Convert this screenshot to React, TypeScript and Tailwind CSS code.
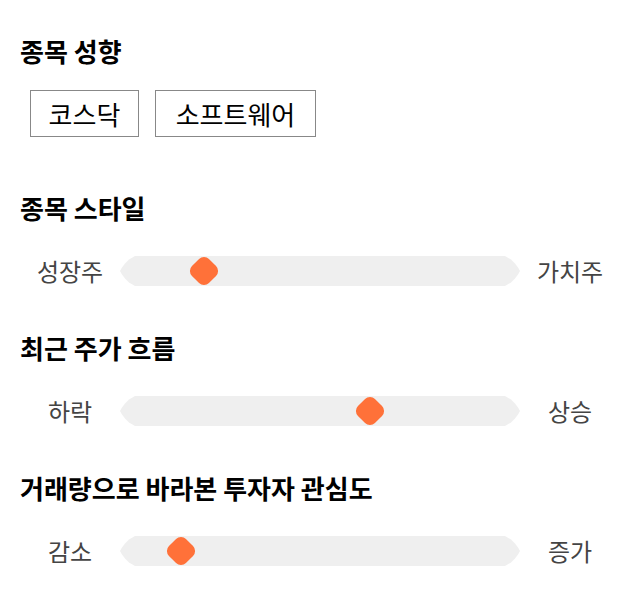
import React from "react";

const font = { fontFamily: '"Noto Sans CJK KR", "Noto Sans", sans-serif' };

const sliders = [
  { title: "종목 스타일", left: "성장주", right: "가치주", value: 21 },
  { title: "최근 주가 흐름", left: "하락", right: "상승", value: 62.5 },
  { title: "거래량으로 바라본 투자자 관심도", left: "감소", right: "증가", value: 15.3 },
];

const Slider = ({ left, right, value }: { left: string; right: string; value: number }) => (
  <div className="flex items-center mt-[33px]">
    <div className="w-[100px] text-center text-[24px] text-[#444] leading-[30px]">{left}</div>
    <div className="relative flex-1 h-[30px]">
      <div className="absolute inset-0 bg-[#efefef] [clip-path:polygon(0_50%,2px_38%,5px_25%,9px_12%,15px_0,calc(100%_-_15px)_0,calc(100%_-_9px)_12%,calc(100%_-_5px)_25%,calc(100%_-_2px)_38%,100%_50%,calc(100%_-_2px)_62%,calc(100%_-_5px)_75%,calc(100%_-_9px)_88%,calc(100%_-_15px)_100%,15px_100%,9px_88%,5px_75%,2px_62%)]" />
      <div
        className="absolute top-1/2 w-[24px] h-[24px] -translate-x-1/2 -translate-y-1/2 rotate-45 rounded-[7px] bg-[#ff7139]"
        style={{ left: `${value}%` }}
      />
    </div>
    <div className="w-[100px] text-center text-[24px] text-[#444] leading-[30px]">{right}</div>
  </div>
);

export default function App() {
  return (
    <div className="w-[640px] h-[606px] bg-white px-5 pt-[36px]" style={font}>
      <h2 className="text-[26px] leading-[30px] font-bold text-black">종목 성향</h2>
      <div className="flex gap-4 mt-6 ml-[10px]">
        <div className="h-[47px] w-[109px] border border-[#888] flex items-center justify-center text-[26px] text-black">
          코스닥
        </div>
        <div className="h-[47px] w-[161px] border border-[#888] flex items-center justify-center text-[26px] text-black">
          소프트웨어
        </div>
      </div>

      {sliders.map((s, i) => (
        <div key={s.title} className={i === 0 ? "mt-[56px]" : "mt-[47px]"}>
          <h2 className="text-[26px] leading-[30px] font-bold text-black">{s.title}</h2>
          <Slider left={s.left} right={s.right} value={s.value} />
        </div>
      ))}
    </div>
  );
}
